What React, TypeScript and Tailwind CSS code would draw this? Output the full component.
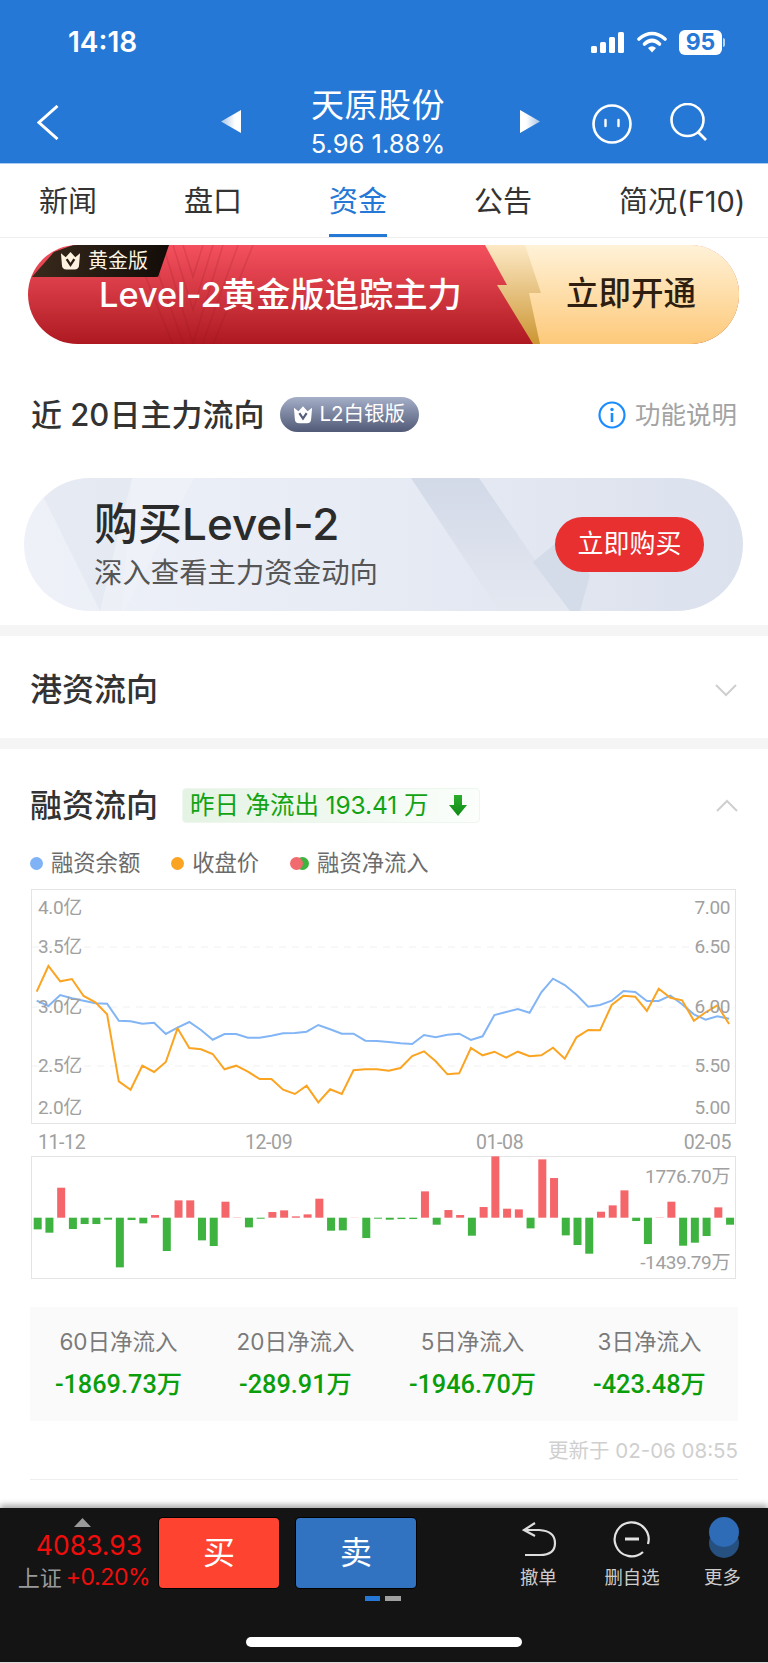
const SANS = "font-['Inter','Noto_Sans_CJK_SC',sans-serif]";
const DIN = "font-['Roboto','Noto_Sans_CJK_SC',sans-serif]";

const orangeY = [665,588,634,627,678,697,733,934,959,887,906,876,775,834,838,852,898,887,905,927,927,959,972,947,997,958,972,901,898,898,902,894,858,844,874,913,910,834,856,845,863,845,859,856,833,866,802,780,781,705,677,680,723,656,683,691,752,727,706,762];
const blueY = [692,708,675,685,692,700,701,752,754,761,758,792,773,756,780,809,792,792,803,803,797,790,789,785,765,778,791,791,812,813,816,820,822,795,802,794,791,810,799,735,726,717,728,667,626,645,674,710,705,692,663,666,693,693,677,703,733,749,739,746];
const bars = [-35,-45,90,-34,-19,-19,-6,-149,-7,-17,8,-100,52,52,-68,-85,48,2,-29,-3,17,22,4,10,57,-39,-38,1,-61,-3,-6,-4,-4,79,-21,23,8,-54,32,184,27,25,-32,175,119,-53,-82,-108,18,37,82,-10,-79,2,48,-84,-75,-55,31,-21];

const pts = (ys: number[]) => ys.map((y, i) => `${(36.7 + i * 11.735).toFixed(1)},${(770 + y / 3).toFixed(1)}`).join(" ");

function Crown({ className, fill = "#fff", eye = "#333" }: { className: string; fill?: string; eye?: string }) {
  return (
    <svg viewBox="0 0 22 20" className={className}>
      <path d="M1 2 L6 6 L11 0.5 L16 6 L21 2 L20 14 Q20 19 15 19 L7 19 Q2 19 2 14 Z" fill={fill} />
      <path d="M7 8 L11 14 L15 8" fill="none" stroke={eye} strokeWidth="2.4" />
    </svg>
  );
}

function Chevron({ up }: { up?: boolean }) {
  return (
    <svg viewBox="0 0 22 13" className="w-[22px] h-[13px]">
      <path d={up ? "M1 12 L11 2 L21 12" : "M1 1 L11 11 L21 1"} fill="none" stroke="#cfcfcf" strokeWidth="2" />
    </svg>
  );
}

function Header() {
  return (
    <div className="bg-[#2678d6] h-[164px] text-white shrink-0 border-b border-[#a9cdf2]">
      <div className="h-[84px] flex items-center justify-between pl-[68px] pr-[43px]">
        <span className="text-[28px] leading-none font-semibold">14:18</span>
        <div className="flex items-center">
          <svg viewBox="0 0 33 21" className="w-[33px] h-[21px]" fill="#fff">
            <rect x="0" y="14" width="6" height="7" rx="1.5" />
            <rect x="9" y="10" width="6" height="11" rx="1.5" />
            <rect x="18" y="5" width="6" height="16" rx="1.5" />
            <rect x="27" y="0" width="6" height="21" rx="1.5" />
          </svg>
          <svg viewBox="0 0 30 22" className="w-[30px] h-[22px] ml-[13px]">
            <path d="M2 8 Q15 -3 28 8" fill="none" stroke="#fff" strokeWidth="3.6" strokeLinecap="round" />
            <path d="M7.5 13 Q15 6 22.5 13" fill="none" stroke="#fff" strokeWidth="3.6" strokeLinecap="round" />
            <path d="M11 17 L15 21.5 L19 17 Q15 13.5 11 17 Z" fill="#fff" />
          </svg>
          <div className="ml-[12px] w-[43px] h-[25px] bg-white rounded-[6px] flex items-center justify-center text-[#2678d6] text-[23px] font-bold leading-none">95</div>
          <div className="w-[2px] h-[9px] bg-[#b8d5f3] rounded-r-sm ml-[1px]" />
        </div>
      </div>
      <div className="h-[78px] flex items-start">
        <svg viewBox="0 0 22 35" className="w-[22px] h-[35px] ml-[37px] mt-[21px]">
          <path d="M20.5 1 L2 17.5 L20.5 34" fill="none" stroke="#fff" strokeWidth="3" />
        </svg>
        <svg viewBox="0 0 20 23" className="w-[20px] h-[23px] ml-[162px] mt-[26px]">
          <defs>
            <linearGradient id="triL" x1="0" x2="1" y1="0" y2="0"><stop offset="0" stopColor="#a8c4e4" /><stop offset="0.7" stopColor="#fff" /></linearGradient>
            <linearGradient id="triR" x1="1" x2="0" y1="0" y2="0"><stop offset="0" stopColor="#a8c4e4" /><stop offset="0.7" stopColor="#fff" /></linearGradient>
          </defs>
          <path d="M0 11.5 L20 0 L20 23 Z" fill="url(#triL)" />
        </svg>
        <div className="w-[134px] ml-[70px] mt-[3px] flex flex-col items-center whitespace-nowrap">
          <span className="text-[33px] leading-[36px] tracking-[0.5px]">天原股份</span>
          <span className="text-[25.5px] leading-[28px] mt-[7px]">5.96 1.88%</span>
        </div>
        <svg viewBox="0 0 20 23" className="w-[20px] h-[23px] ml-[75px] mt-[26px]">
          <path d="M20 11.5 L0 0 L0 23 Z" fill="url(#triR)" />
        </svg>
        <svg viewBox="0 0 40 40" className="w-[40px] h-[40px] ml-[52px] mt-[20px]">
          <circle cx="20" cy="20" r="18.5" fill="none" stroke="#fff" strokeWidth="2.6" />
          <path d="M13.5 16 V22 M26.5 16 V22" stroke="#fff" strokeWidth="2.4" strokeLinecap="round" />
        </svg>
        <svg viewBox="0 0 38 38" className="w-[38px] h-[38px] ml-[38px] mt-[19px]">
          <circle cx="17.5" cy="17" r="16" fill="none" stroke="#fff" strokeWidth="2.6" />
          <path d="M28 29 L36 37" stroke="#fff" strokeWidth="2.8" />
        </svg>
      </div>
    </div>
  );
}

function Tabs() {
  const tabs = ["新闻", "盘口", "资金", "公告", "简况(F10)"];
  return (
    <div className="h-[74px] bg-white shrink-0 flex items-center pl-[39px] pt-[2px] gap-[87px] border-b border-[#eeeeee]">
      {tabs.map((t) => (
        <div key={t} className={`relative text-[29px] leading-none whitespace-nowrap ${t === "资金" ? "text-[#2678d6]" : "text-[#333333]"}`}>
          {t}
          {t === "资金" && <div className="absolute left-0 right-0 top-[47px] h-[3px] bg-[#2678d6]" />}
        </div>
      ))}
    </div>
  );
}

function GoldBanner() {
  return (
    <div className="relative ml-[28px] mt-[7px] w-[711px] h-[99px] rounded-full overflow-hidden bg-gradient-to-b from-[#f5505f] to-[#ae1820] flex items-center shrink-0">
      <svg viewBox="0 0 711 99" className="absolute inset-0 w-full h-full">
        <defs>
          <linearGradient id="cream" x1="0" x2="0" y1="0" y2="1"><stop offset="0" stopColor="#fff2d8" /><stop offset="1" stopColor="#fdc97a" /></linearGradient>
          <linearGradient id="gold" x1="0" x2="0" y1="0" y2="1"><stop offset="0" stopColor="#fde9c6" /><stop offset="1" stopColor="#cc9632" /></linearGradient>
        </defs>
        <g fill="none" stroke="#8f1420" strokeOpacity="0.18" strokeWidth="1.5">
          <path d="M135 0 L165 99 L195 0" />
          <path d="M145 0 L165 65 L185 0" />
          <path d="M155 0 L165 32 L175 0" />
          <path d="M120 0 L165 125 L210 0" />
          <path d="M105 0 L165 150 L225 0" />
        </g>
        <path d="M457 0 L711 0 L711 99 L505 99 L469 40 L479 40 Z" fill="url(#gold)" />
        <path d="M497 0 L711 0 L711 99 L512 99 L501 48 L513 48 Z" fill="url(#cream)" />
      </svg>
      <div className="absolute left-[4px] top-0 w-[137px] h-[32px] rounded-tl-[30px] rounded-br-[14px] bg-gradient-to-r from-[#3a2a1c] to-[#120c08] flex items-center pl-[28px] [clip-path:polygon(0_100%,16%_22%,30%_0,100%_0,92%_100%)]">
        <Crown className="w-[21px] h-[20px]" fill="#fdf3e0" eye="#2a1d12" />
        <span className="ml-[7px] text-[20px] leading-none text-[#fdf3e0]">黄金版</span>
      </div>
      <span className="relative ml-[71px] mt-[1px] text-[34.3px] font-medium leading-none text-white whitespace-nowrap">Level-2黄金版追踪主力</span>
      <span className="relative ml-auto mr-[43px] text-[32.5px] font-medium leading-none text-[#2d1e10] whitespace-nowrap">立即开通</span>
    </div>
  );
}

function MainFlow() {
  return (
    <div className="flex items-center h-[35px] mt-[53px] pl-[31px] pr-[31px] shrink-0">
      <span className="text-[31px] font-medium leading-none text-[#333333] whitespace-nowrap">近 20日主力流向</span>
      <div className="ml-[16px] w-[139px] h-[35px] rounded-full bg-gradient-to-b from-[#a6afc8] to-[#515b77] flex items-center pl-[13px]">
        <Crown className="w-[20px] h-[20px]" fill="#fff" eye="#555f7b" />
        <span className="ml-[6px] text-[20.5px] leading-none text-white whitespace-nowrap">L2白银版</span>
      </div>
      <svg viewBox="0 0 28 28" className="ml-auto w-[28px] h-[28px]">
        <circle cx="14" cy="14" r="12.5" fill="none" stroke="#1a8cff" strokeWidth="2.2" />
        <circle cx="14" cy="8.5" r="1.7" fill="#1a8cff" />
        <path d="M14 12 V21" stroke="#1a8cff" strokeWidth="2.6" />
      </svg>
      <span className="ml-[9px] text-[25.5px] leading-none text-[#a3a3a3] whitespace-nowrap">功能说明</span>
    </div>
  );
}

function BuyBanner() {
  return (
    <div className="relative ml-[24px] mt-[46px] w-[719px] h-[133px] rounded-full overflow-hidden bg-gradient-to-r from-[#eef1f8] via-[#e7ebf4] to-[#dbe1ed] flex items-center shrink-0">
      <svg viewBox="0 0 719 133" className="absolute inset-0 w-full h-full">
        <defs>
          <linearGradient id="band" x1="0.5" x2="0.5" y1="0" y2="1"><stop offset="0" stopColor="#d2d9e7" /><stop offset="1" stopColor="#e4e8f1" /></linearGradient>
        </defs>
        <path d="M20 20 L76 133 L98 133 L108 0 L40 0 Z" fill="#dde2ec" fillOpacity="0.4" />
        <path d="M108 0 L170 0 L100 133 L76 133 Z" fill="#eff2f8" fillOpacity="0.7" />
        <path d="M387 0 L455 0 L546 133 L475 133 Z" fill="url(#band)" />
        <path d="M509 84 L546 133 L556 133 L566 97 L538 60 Z" fill="#d5dce9" />
      </svg>
      <div className="relative ml-[70px] flex flex-col">
        <span className="text-[44px] font-medium leading-none text-[#2b2b2b] whitespace-nowrap">购买Level-2</span>
        <span className="mt-[13px] text-[28.4px] leading-none text-[#555555] whitespace-nowrap">深入查看主力资金动向</span>
      </div>
      <div className="relative ml-auto mr-[39px] w-[149px] h-[55px] mt-[-1px] rounded-full bg-[#e83030] flex items-center justify-center text-[26px] leading-none text-white">立即购买</div>
    </div>
  );
}

function LegendDot({ color }: { color: string }) {
  return <span className={`w-[13px] h-[13px] rounded-full ${color}`} />;
}

function ChartLabel({ y, left, children }: { y: number; left?: boolean; children: string }) {
  return (
    <span
      className={`absolute text-[19px] leading-none text-[#a0a0a0] -translate-y-1/2 whitespace-nowrap tracking-[-0.4px] ${left ? "left-[6px]" : "right-[5px]"}`}
      style={{ top: y }}
    >
      {children}
    </span>
  );
}

function Financing() {
  return (
    <div className={`flex flex-col shrink-0 ${DIN}`}>
      <div className={`flex items-center h-[36px] mt-[38px] pl-[30px] pr-[30px] ${SANS}`}>
        <span className="text-[32px] font-medium leading-none text-[#333333] whitespace-nowrap mt-[1px]">融资流向</span>
        <div className="ml-[24px] w-[298px] h-[35px] rounded-[4px] bg-gradient-to-r from-[#e4f3e4] to-[#fbfefb] border border-[#eef7ee] flex items-center pl-[7px] text-[#12a312]">
          <span className="text-[24.5px] leading-none whitespace-nowrap tracking-[-0.1px]">昨日 净流出 193.41 万</span>
          <svg viewBox="0 0 18 21" className="w-[18px] h-[21px] ml-[21px]">
            <defs><linearGradient id="dn" x1="0" x2="0" y1="0" y2="1"><stop offset="0" stopColor="#2dad2d" /><stop offset="1" stopColor="#0d8a14" /></linearGradient></defs>
            <path d="M5 0 H13 V10 H18 L9 21 L0 10 H5 Z" fill="url(#dn)" />
          </svg>
        </div>
        <div className="ml-auto"><Chevron up /></div>
      </div>
      <div className={`flex items-center h-[22px] mt-[29px] pl-[30px] text-[22.3px] leading-none text-[#6b6b6b] whitespace-nowrap ${SANS}`}>
        <LegendDot color="bg-[#7fb3f5]" />
        <span className="ml-[8px]">融资余额</span>
        <span className="ml-[31px]"><LegendDot color="bg-[#fba422] block" /></span>
        <span className="ml-[8px]">收盘价</span>
        <span className="relative ml-[31px] w-[19px] h-[13px]">
          <span className="absolute right-0 top-0 w-[13px] h-[13px] rounded-full bg-[#3fb340]" />
          <span className="absolute left-0 top-0 w-[13px] h-[13px] rounded-full bg-[#f06a6e]" />
        </span>
        <span className="ml-[8px]">融资净流入</span>
      </div>
      <div className="relative ml-[31px] mt-[15px] w-[705px] h-[235px] border border-[#e4e4e4] bg-white">
        <svg viewBox="32 890 703 233" className="absolute inset-0 w-full h-full">
          {[947, 1007, 1066].map((y) => (
            <line key={y} x1="32" x2="735" y1={y} y2={y} stroke="#f0f0f0" strokeWidth="1" strokeDasharray="7 6" />
          ))}
          <polyline points={pts(blueY)} fill="none" stroke="#82b5f5" strokeWidth="2" />
          <polyline points={pts(orangeY)} fill="none" stroke="#fba422" strokeWidth="2" />
        </svg>
        <ChartLabel left y={17}>4.0亿</ChartLabel>
        <ChartLabel left y={56}>3.5亿</ChartLabel>
        <ChartLabel left y={116}>3.0亿</ChartLabel>
        <ChartLabel left y={175}>2.5亿</ChartLabel>
        <ChartLabel left y={217}>2.0亿</ChartLabel>
        <ChartLabel y={17}>7.00</ChartLabel>
        <ChartLabel y={56}>6.50</ChartLabel>
        <ChartLabel y={116}>6.00</ChartLabel>
        <ChartLabel y={175}>5.50</ChartLabel>
        <ChartLabel y={217}>5.00</ChartLabel>
      </div>
      <div className="relative h-[32px] ml-[31px] w-[705px] text-[19.5px] leading-none text-[#a0a0a0] tracking-[-0.4px]">
        <span className="absolute left-[7px] top-[9px]">11-12</span>
        <span className="absolute left-[214px] top-[9px]">12-09</span>
        <span className="absolute left-[445px] top-[9px]">01-08</span>
        <span className="absolute right-[5px] top-[9px]">02-05</span>
      </div>
      <div className="relative ml-[31px] w-[705px] h-[123px] border border-[#e4e4e4] bg-white">
        <svg viewBox="32 1157 703 121" className="absolute inset-0 w-full h-full overflow-visible">
          {bars.map((v, i) => {
            const x = 37.7 + i * 11.735 - 4;
            const h = Math.abs(v) / 3;
            const y = v > 0 ? 1217.7 - h : 1217.7;
            return <rect key={i} x={x} y={y} width="8" height={h} fill={v > 0 ? "#f4666a" : "#3fb340"} fillOpacity={Math.abs(v) < 3 ? 0.4 : 1} />;
          })}
        </svg>
        <ChartLabel y={19}>1776.70万</ChartLabel>
        <ChartLabel y={105}>-1439.79万</ChartLabel>
      </div>
    </div>
  );
}

function Stats() {
  const items = [
    ["60日净流入", "-1869.73万"],
    ["20日净流入", "-289.91万"],
    ["5日净流入", "-1946.70万"],
    ["3日净流入", "-423.48万"],
  ];
  return (
    <div className="shrink-0">
      <div className="ml-[30px] mt-[28px] w-[708px] h-[114px] bg-[#fafafa] grid grid-cols-4">
        {items.map(([a, b]) => (
          <div key={a} className="flex flex-col items-center pt-[24px] whitespace-nowrap">
            <span className="text-[22.5px] leading-none text-[#7a7a7a]">{a}</span>
            <span className="mt-[18px] text-[25.3px] font-medium leading-none text-[#0a9e0a] font-['Roboto','Noto_Sans_CJK_SC',sans-serif]">{b}</span>
          </div>
        ))}
      </div>
      <div className="h-[59px] ml-[30px] w-[708px] border-b border-[#efefef] flex justify-end items-start pt-[20px] text-[20.5px] leading-none text-[#cfcfcf]">
        更新于 02-06 08:55
      </div>
    </div>
  );
}

function BottomBar() {
  return (
    <div className="relative mt-[28px] h-[155px] bg-[#141414] shrink-0 shadow-[0_-3px_6px_rgba(0,0,0,0.35)] border-b border-[#dddddd]">
      <div className="flex items-start">
        <div className="w-[159px] flex flex-col items-center pt-[10px] shrink-0">
          <svg viewBox="0 0 17 9" className="w-[17px] h-[9px] ml-[6px]"><path d="M8.5 0 L17 9 H0 Z" fill="#9a9a9a" /></svg>
          <span className="mt-[8px] text-[26.5px] leading-[20px] text-[#f20d0d] ml-[19px]">4083.93</span>
          <div className="mt-[11px] ml-[9px] flex items-center whitespace-nowrap leading-none">
            <span className="text-[22px] text-[#9a9a9a]">上证</span>
            <span className="ml-[4px] text-[23px] text-[#f20d0d] tracking-[-0.4px]">+0.20%</span>
          </div>
        </div>
        <div className="mt-[10px] w-[120px] h-[70px] rounded-[4px] bg-[#fe4430] ring-1 ring-black flex items-center justify-center text-[32px] leading-none text-white">买</div>
        <div className="ml-[17px] mt-[10px] w-[120px] h-[70px] rounded-[4px] bg-[#3173c1] ring-1 ring-black flex items-center justify-center text-[32px] leading-none text-white">卖</div>
        <div className="ml-auto mt-[9px] mr-[27px] flex items-start text-[18.4px] leading-none text-[#cccccc]">
          <div className="flex flex-col items-center w-[37px]">
            <svg viewBox="0 0 36 36" className="w-[36px] h-[36px] mt-[5px] ml-[3px]">
              <path d="M13 1 L2 8 L13 14 M3 8 H17 Q33 9 33 21 Q33 33 18 33 H3" fill="none" stroke="#dddddd" strokeWidth="2.2" />
            </svg>
            <span className="mt-[10px] whitespace-nowrap">撤单</span>
          </div>
          <div className="flex flex-col items-center w-[56px] ml-[47px]">
            <svg viewBox="0 0 38 38" className="w-[38px] h-[38px] mt-[3px] ml-[-1px]">
              <path d="M30 32 A17 17 0 1 1 35 24" fill="none" stroke="#e2e2e2" strokeWidth="2.2" />
              <path d="M12 19 H26" stroke="#e2e2e2" strokeWidth="3" />
            </svg>
            <span className="mt-[10px] whitespace-nowrap">删自选</span>
          </div>
          <div className="flex flex-col items-center w-[37px] ml-[44px]">
            <div className="relative w-[30px] h-[41px] ml-[3px]">
              <div className="absolute left-0 bottom-0 w-[30px] h-[30px] rounded-full bg-[#25507f]" />
              <div className="absolute left-0 top-0 w-[30px] h-[30px] rounded-full bg-[#2e6cb8]" />
            </div>
            <span className="mt-[10px] whitespace-nowrap">更多</span>
          </div>
        </div>
      </div>
      <div className="absolute top-[88px] left-[365px] flex gap-[5px]">
        <div className="w-[15px] h-[5px] bg-[#2678d6]" />
        <div className="w-[16px] h-[5px] bg-[#a0a0a0]" />
      </div>
      <div className="absolute left-[246px] top-[129px] w-[276px] h-[10px] rounded-full bg-white" />
    </div>
  );
}

export default function App() {
  return (
    <div className={`w-[768px] h-[1663px] overflow-hidden bg-white flex flex-col ${SANS}`}>
      <Header />
      <Tabs />
      <GoldBanner />
      <MainFlow />
      <BuyBanner />
      <div className="h-[11px] mt-[14px] bg-[#f5f5f5] shrink-0" />
      <div className="h-[102px] pt-[6px] flex items-center justify-between pl-[30px] pr-[31px] shrink-0">
        <span className="text-[32px] font-medium leading-none text-[#333333] whitespace-nowrap">港资流向</span>
        <Chevron />
      </div>
      <div className="h-[11px] bg-[#f5f5f5] shrink-0" />
      <Financing />
      <Stats />
      <BottomBar />
    </div>
  );
}
